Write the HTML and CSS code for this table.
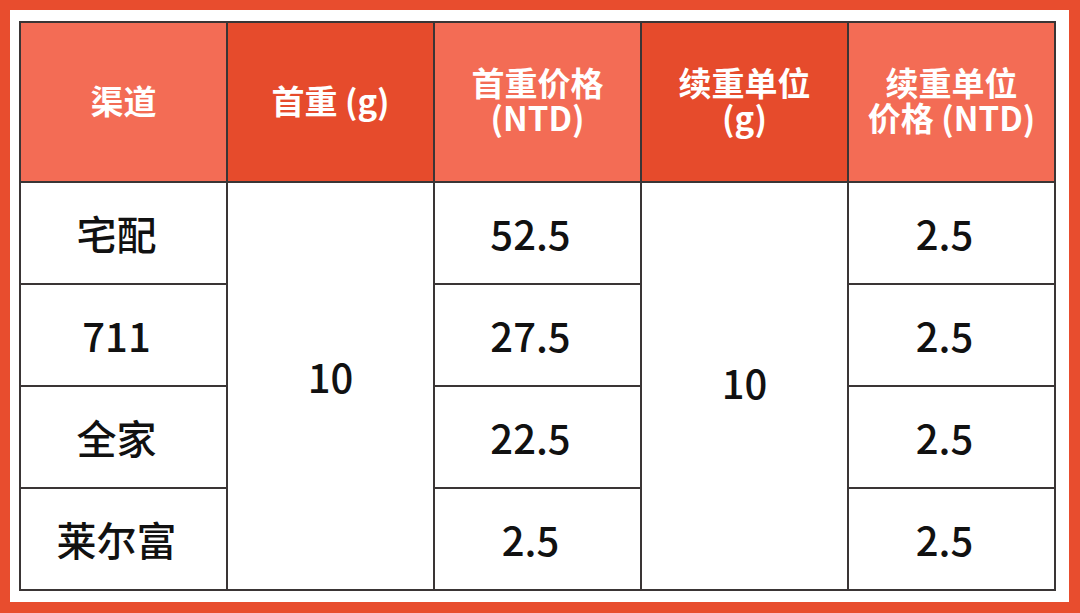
FILE: index.html
```html
<!DOCTYPE html>
<html lang="zh-CN">
<head>
<meta charset="utf-8">
<title>运费表</title>
<link rel="stylesheet" href="styles.css">
</head>
<body>
<div class="frame">
  <table class="rates">
    <colgroup>
      <col class="col">
      <col class="col">
      <col class="col">
      <col class="col">
      <col class="col">
    </colgroup>
    <thead>
      <tr>
        <th class="light">渠道</th>
        <th class="dark">首重 (g)</th>
        <th class="light"><span class="line">首重价格</span><span class="line">(NTD)</span></th>
        <th class="dark"><span class="line">续重单位</span><span class="line">(g)</span></th>
        <th class="light"><span class="line">续重单位</span><span class="line">价格 (NTD)</span></th>
      </tr>
    </thead>
    <tbody>
      <tr>
        <td>宅配</td>
        <td rowspan="4" class="merged first">10</td>
        <td>52.5</td>
        <td rowspan="4" class="merged second">10</td>
        <td>2.5</td>
      </tr>
      <tr>
        <td>711</td>
        <td>27.5</td>
        <td>2.5</td>
      </tr>
      <tr>
        <td>全家</td>
        <td>22.5</td>
        <td>2.5</td>
      </tr>
      <tr>
        <td>莱尔富</td>
        <td>2.5</td>
        <td>2.5</td>
      </tr>
    </tbody>
  </table>
</div>
</body>
</html>
```

FILE: styles.css
```css
html, body {
  margin: 0;
  padding: 0;
  background: #ffffff;
}

.frame {
  box-sizing: border-box;
  width: 1080px;
  height: 613px;
  border: solid #e84d2e;
  border-width: 10px 11px 11px 10px;
  padding: 11px 0 0 9px;
  background: #ffffff;
}

.rates {
  border-collapse: collapse;
  table-layout: fixed;
  width: 1037px;
  font-family: "Noto Sans CJK SC", "Noto Sans", sans-serif;
}

.rates .col {
  width: 207px;
}

.rates th,
.rates td {
  border: 2px solid #3a3535;
  text-align: center;
  vertical-align: middle;
  padding: 0;
}

.rates th {
  height: 154px;
  padding-bottom: 4px;
  color: #ffffff;
  font-size: 33px;
  font-weight: 700;
  line-height: 36px;
}

.rates th .line {
  display: block;
  height: 35px;
  line-height: 35px;
  white-space: nowrap;
}

.rates th.light {
  background: #f36c55;
}

.rates th.dark {
  background: #e64b2c;
}

.rates td {
  height: 100px;
  color: #111111;
  font-size: 40px;
  font-weight: 500;
  line-height: 48px;
  padding-right: 14px;
}

.rates td.merged {
  padding-right: 0;
}

.rates td.first {
  padding-bottom: 20px;
}

.rates td.second {
  padding-bottom: 8px;
}
```
